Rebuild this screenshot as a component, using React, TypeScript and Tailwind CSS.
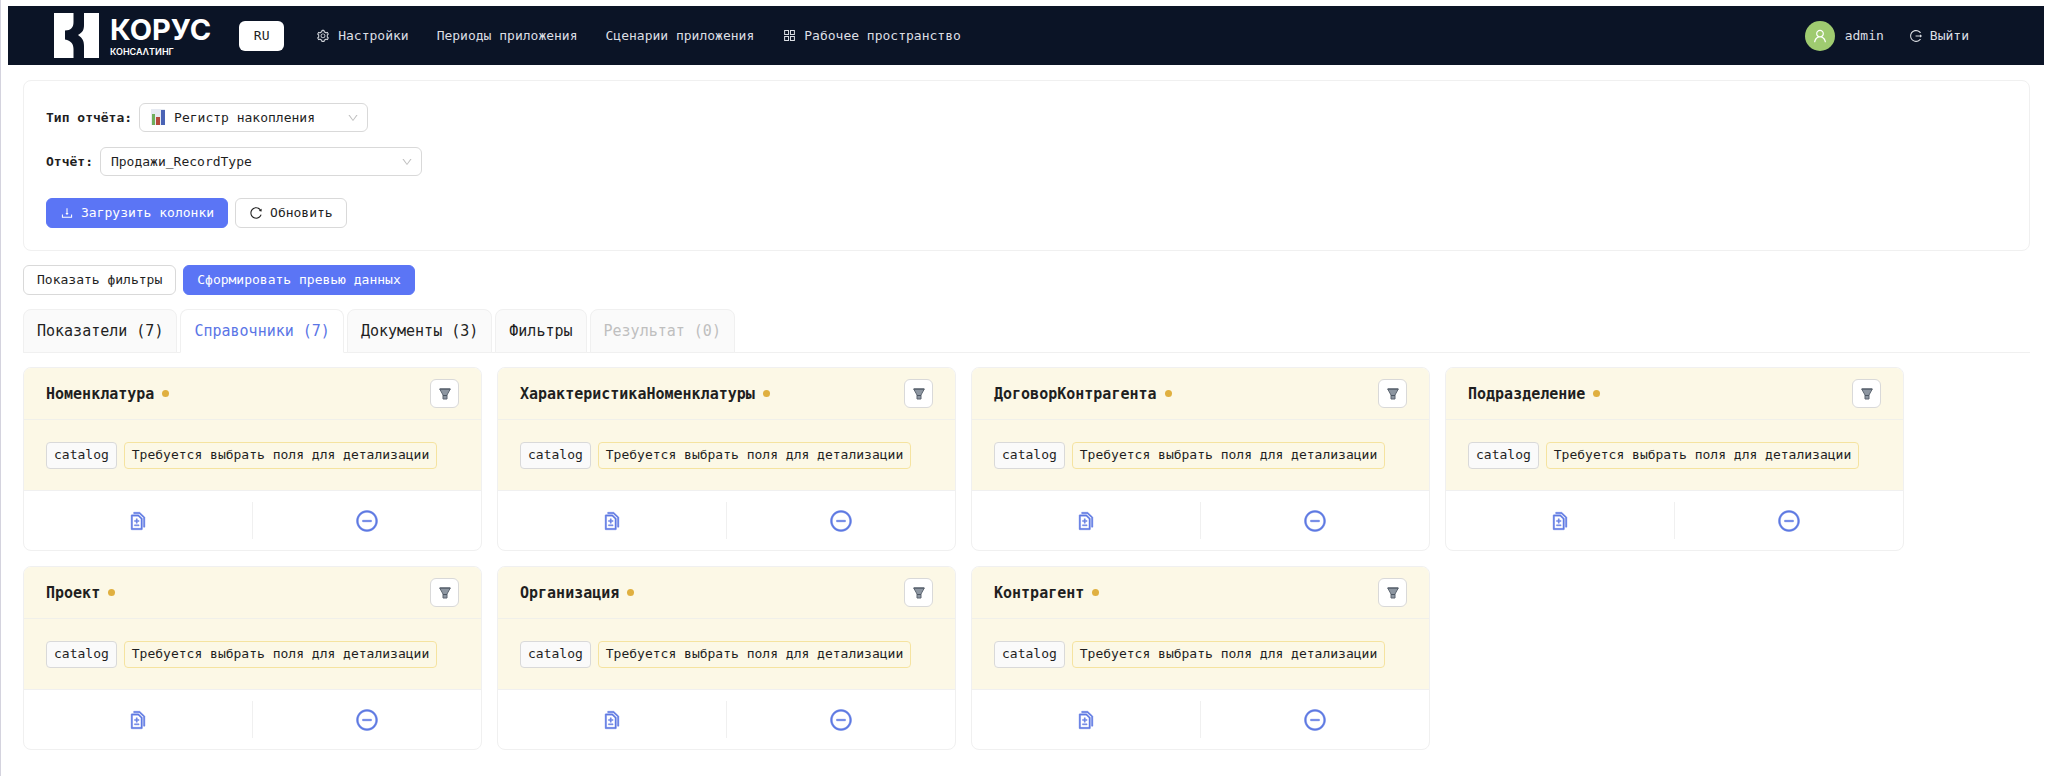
import React, { useState } from 'react';
import {
  AiOutlineAppstore,
  AiOutlineDiff,
  AiOutlineDown,
  AiOutlineDownload,
  AiOutlineLogout,
  AiOutlineMinusCircle,
  AiOutlineReload,
  AiOutlineSetting,
  AiOutlineUser,
} from 'react-icons/ai';

interface Tab {
  id: string;
  label: string;
  disabled?: boolean;
}

const TABS: Tab[] = [
  { id: 'measures', label: 'Показатели (7)' },
  { id: 'catalogs', label: 'Справочники (7)' },
  { id: 'documents', label: 'Документы (3)' },
  { id: 'filters', label: 'Фильтры' },
  { id: 'result', label: 'Результат (0)', disabled: true },
];

const CATALOGS = [
  'Номенклатура',
  'ХарактеристикаНоменклатуры',
  'ДоговорКонтрагента',
  'Подразделение',
  'Проект',
  'Организация',
  'Контрагент',
];

const Logo = () => (
  <a href="#" className="flex items-center gap-[11px] text-white">
    <svg width="45" height="45" viewBox="0 0 45 45" fill="currentColor" aria-hidden="true">
      <path d="M0 0H19.5V9C19.5 14.5 17 17.5 11 17.5V26.5C17 27.5 19.5 31 19.5 36V45H0Z" />
      <path d="M45 0H30V12C30 17 28.5 19.5 24 22C28.5 25 30 28 30 33V45H45Z" />
    </svg>
    <span className="flex flex-col gap-[2px] pt-[3px] font-['Inter',sans-serif]">
      <span className="text-[29px] leading-7 font-bold">КОРУС</span>
      <span className="text-[9px] leading-3 font-semibold">КОНСАΛТИНГ</span>
    </span>
  </a>
);

const ChartIcon = () => (
  <svg width="14" height="16" viewBox="0 0 14 16" aria-hidden="true">
    <rect width="14" height="16" fill="#e6eaf2" />
    <rect x="1" y="5" width="3" height="11" fill="#6fae5c" />
    <rect x="5" y="8" width="4" height="8" fill="#b5493c" />
    <rect x="10" y="1" width="4" height="15" fill="#4a63b5" />
  </svg>
);

const FunnelIcon = () => (
  <svg width="12" height="12" viewBox="0 0 12 12" aria-hidden="true">
    <path d="M0.7 1H11.3L8 7V11H4V7Z" fill="#8d96a1" stroke="#5c6570" strokeLinejoin="round" />
    <path d="M0.7 1H11.3M4 7.5H8" stroke="#4d5763" />
  </svg>
);

interface SelectFieldProps {
  id: string;
  label: string;
  value: string;
  width: string;
  icon?: React.ReactNode;
}

const SelectField: React.FC<SelectFieldProps> = ({ id, label, value, width, icon }) => (
  <div className="flex items-center gap-[7px]">
    <label htmlFor={id} className="font-bold">{label}</label>
    <div className={`relative ${width}`}>
      <select
        id={id}
        defaultValue={value}
        className={`block h-[29px] w-full appearance-none rounded-md border border-[#d9d9d9] bg-white pr-8 ${icon ? 'pl-[34px]' : 'pl-[10px]'}`}
      >
        <option>{value}</option>
      </select>
      {icon && <span className="pointer-events-none absolute top-[6px] left-3">{icon}</span>}
      <AiOutlineDown size={12} className="pointer-events-none absolute top-[9px] right-[9px] text-[#bfbfbf]" />
    </div>
  </div>
);

interface ButtonProps {
  primary?: boolean;
  icon?: React.ReactNode;
  children: React.ReactNode;
}

const Button: React.FC<ButtonProps> = ({ primary, icon, children }) => (
  <button
    type="button"
    className={`flex h-[30px] items-center gap-[7px] rounded-md border px-[13px] ${
      primary ? 'border-[#5b75f5] bg-[#5b75f5] text-white' : 'border-[#d9d9d9] bg-white hover:border-[#5b75f5]'
    }`}
  >
    {icon}
    {children}
  </button>
);

const CatalogCard: React.FC<{ title: string }> = ({ title }) => (
  <article className="w-[459px] overflow-hidden rounded-lg border border-[#f0f0f0] bg-white">
    <header className="flex h-[52px] items-center justify-between border-b border-[#f0f0ea] bg-[#fcf8e6] px-[22px]">
      <h3 className="flex items-center gap-2 text-[15px] font-bold">
        {title}
        <span className="size-[7px] rounded-full bg-[#e0b040]" />
      </h3>
      <button
        type="button"
        aria-label="Фильтр"
        className="flex h-[29px] w-[29px] items-center justify-center rounded-md border border-[#d9d9d9] bg-white"
      >
        <FunnelIcon />
      </button>
    </header>
    <div className="flex h-[70px] items-center gap-[7px] bg-[#fcf8e6] px-[22px]">
      <span className="flex h-[27px] items-center rounded-[4px] border border-[#d9d9d9] bg-[#fafafa] px-[7px]">catalog</span>
      <span className="flex h-[27px] items-center rounded-[4px] border border-[#f5e3a0] bg-[#fcf8e6] px-[7px]">
        Требуется выбрать поля для детализации
      </span>
    </div>
    <footer className="grid grid-cols-2 divide-x divide-[#f0f0f0] border-t border-[#f0f0f0] py-[11px] text-[#5f7ae3]">
      <button type="button" aria-label="Детализация" className="flex h-[37px] items-center justify-center">
        <AiOutlineDiff size={20} strokeWidth={20} />
      </button>
      <button type="button" aria-label="Убрать" className="flex h-[37px] items-center justify-center">
        <AiOutlineMinusCircle size={24} strokeWidth={20} />
      </button>
    </footer>
  </article>
);

export default function App() {
  const [activeTab, setActiveTab] = useState('catalogs');

  return (
    <div className="min-h-screen border-l border-[#d4d3de] bg-white pt-[6px] font-['DejaVu_Sans_Mono',monospace] text-[13px] leading-5 text-[#1f1f1f]">
      {/* Top bar */}
      <header className="mr-1 ml-[7px] flex h-[59px] items-center justify-between bg-[#0b1426] pr-[75px] pl-[46px] text-[#dcdfe4]">
        <div className="flex items-center">
          <Logo />
          <button type="button" className="ml-7 h-[30px] w-[45px] rounded-md bg-white text-[#1f1f1f]">RU</button>
          <nav className="ml-8 flex items-center gap-7">
            <a href="#" className="flex items-center gap-2"><AiOutlineSetting size={14} />Настройки</a>
            <a href="#">Периоды приложения</a>
            <a href="#">Сценарии приложения</a>
            <a href="#" className="flex items-center gap-[7px]"><AiOutlineAppstore size={15} />Рабочее пространство</a>
          </nav>
        </div>
        <div className="flex items-center">
          <span className="flex size-[30px] items-center justify-center rounded-full bg-[#9fcb70] text-white">
            <AiOutlineUser size={16} />
          </span>
          <span className="ml-[10px]">admin</span>
          <a href="#" className="ml-[25px] flex items-center gap-[7px]"><AiOutlineLogout size={14} />Выйти</a>
        </div>
      </header>

      <main className="pt-[15px] pr-[18px] pb-[22px] pl-[22px]">
        {/* Report settings */}
        <section className="rounded-lg border border-[#f0f0f0] p-[22px]">
          <div className="flex flex-col gap-[15px]">
            <SelectField id="report-type" label="Тип отчёта:" value="Регистр накопления" width="w-[229px]" icon={<ChartIcon />} />
            <SelectField id="report" label="Отчёт:" value="Продажи_RecordType" width="w-[322px]" />
          </div>
          <div className="mt-[22px] flex gap-[7px]">
            <Button primary icon={<AiOutlineDownload size={14} />}>Загрузить колонки</Button>
            <Button icon={<AiOutlineReload size={14} />}>Обновить</Button>
          </div>
        </section>

        <div className="mt-[14px] flex gap-[7px]">
          <Button>Показать фильтры</Button>
          <Button primary>Сформировать превью данных</Button>
        </div>

        {/* Tabs */}
        <div role="tablist" className="mt-[14px] flex gap-[3px] border-b border-[#f0f0f0] text-[15px]">
          {TABS.map(tab => (
            <button
              key={tab.id}
              type="button"
              role="tab"
              aria-selected={activeTab === tab.id}
              disabled={tab.disabled}
              onClick={() => setActiveTab(tab.id)}
              className={`-mb-px h-[44px] rounded-t-lg border border-[#f0f0f0] px-[13px] ${
                activeTab === tab.id ? 'border-b-white bg-white text-[#5b75e6]' : 'bg-[#fafafa]'
              } ${tab.disabled ? 'text-[#bfbfbf]' : ''}`}
            >
              {tab.label}
            </button>
          ))}
        </div>

        {/* Catalog cards */}
        <div className="mt-[14px] flex flex-wrap gap-[15px]">
          {CATALOGS.map(title => (
            <CatalogCard key={title} title={title} />
          ))}
        </div>
      </main>
    </div>
  );
}
